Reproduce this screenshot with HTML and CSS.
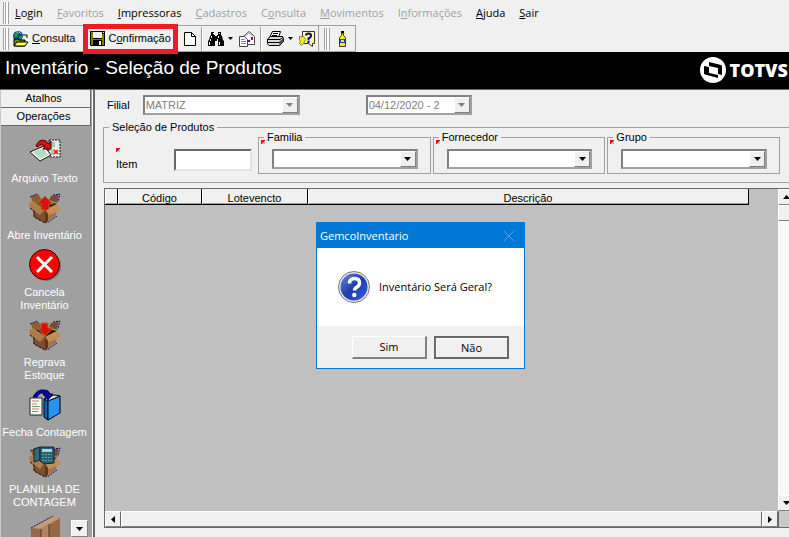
FILE: index.html
```html
<!DOCTYPE html>
<html lang="pt-BR">
<head>
<meta charset="utf-8">
<title>Inventário - Seleção de Produtos</title>
<link rel="stylesheet" href="styles.css">
</head>
<body>
<svg class="defs" aria-hidden="true">
  <symbol id="box" viewBox="0 0 32 32">
    <path d="M3 13l13 5v13L5 25z" fill="#7c5030"/>
    <path d="M16 18l12-5-1 11-11 7z" fill="#a87444"/>
    <path d="M16 18v13l3-2V17z" fill="#5c381c"/>
    <path d="M3 13l10-5 15 4-12 6z" fill="#2c1a0c"/>
    <path d="M2 4l7-2 4 6-9 5z" fill="#8c5c34"/>
    <path d="M22 4l8-2-2 9-8-3z" fill="#7c4c2c"/>
    <path d="M0 11l4-2 12 8-5 6L1 16z" fill="#b07c4c"/>
    <path d="M16 18l12-6 4 6-12 5z" fill="#c48e5c"/>
    <path d="M1 5l7-3M24 3l7-1-2 8M28 24l-10 7" fill="none" stroke="#10108a" stroke-dasharray="2 1"/>
    <path d="M1 16l4 3v6l11 6 2-1" fill="none" stroke="#1c1008" stroke-dasharray="3 1"/>
  </symbol>
  <symbol id="down" viewBox="0 0 7 4"><path d="M0 0h7L3.500 4z" fill="currentColor"/></symbol>
</svg>

<nav class="menubar">
  <span class="grip"></span>
  <a href="#"><u>L</u>ogin</a>
  <a href="#" class="off"><u>F</u>avoritos</a>
  <a href="#"><u>I</u>mpressoras</a>
  <a href="#" class="off"><u>C</u>adastros</a>
  <a href="#" class="off">C<u>o</u>nsulta</a>
  <a href="#" class="off"><u>M</u>ovimentos</a>
  <a href="#" class="off">I<u>n</u>formações</a>
  <a href="#"><u>A</u>juda</a>
  <a href="#"><u>S</u>air</a>
</nav>

<div class="toolbar">
  <div class="band">
    <span class="grip"></span>
    <button class="tool consult">
      <svg width="17" height="16" viewBox="0 0 17 16"><circle cx="6" cy="5" r="5" fill="#0a3c8c"/><path d="M2 3l3-2 2 2-2 3-2 1zM7 6l3-2 1 2-3 3z" fill="#18a040"/><path d="M4 1l3 0 2 2" stroke="#9cf" fill="none"/><path d="M2 8h4l1 1h6v6H2z" fill="#808000" stroke="#000"/><path d="M2 15l3-4h11l-3 4z" fill="#ffff60" stroke="#000"/><path d="M11 4h4v3" fill="none" stroke="#000"/></svg>
      <span><u>C</u>onsulta</span>
    </button>
    <button class="tool confirm">
      <svg width="15" height="15" viewBox="0 0 15 15"><path d="M0 0h15v15H1l-1-1z" fill="#000"/><path d="M1 1h2v7h9V3h2v11H1z" fill="#808000"/><path d="M3 1h9v6H3z" fill="#efefef"/><path d="M3 9h9v6H3z" fill="#000"/><path d="M9 10h2v4H9z" fill="#efefef"/><path d="M13 1h1v1h-1z" fill="#efefef"/></svg>
      <span>C<u>o</u>nfirmação</span>
    </button>
    <button class="tool" aria-label="Novo">
      <svg width="12" height="14" viewBox="0 0 12 14"><path d="M.5.5h7l4 4v9H.5z" fill="#fff" stroke="#000"/><path d="M7.500.5v4h4" fill="none" stroke="#000"/></svg>
    </button>
    <span class="sep"></span>
    <button class="tool" aria-label="Localizar">
      <svg width="16" height="14" viewBox="0 0 16 14"><path d="M3 0h3v3h1v1h2V3h1V0h3v3l1 1 1 4 1 1v5h-6V9H7v5H0V9l1-1 1-4 1-1z" fill="#000"/><path d="M3 4h1v2H3zM2 7h1v2H2zM10 4h1v2h-1zM9 7h1v2H9zM1 10h1v3H1zM11 10h1v3h-1zM5 1h1v1H5zM11 1h1v1h-1z" fill="#fff"/></svg>
      <svg class="caret" width="5" height="3" viewBox="0 0 5 3"><path d="M0 0h5L2.500 3z"/></svg>
    </button>
    <button class="tool" aria-label="Enviar">
      <svg width="16" height="16" viewBox="0 0 16 16"><path d="M4.500 5.500L10 .5l5.500 5v8h-11z" fill="#fff" stroke="#444"/><path d="M6 5l4-3 4 3" fill="none" stroke="#aaa"/><path d="M12 6h2v3h-2z" fill="#d00020"/><path d="M8 9h3v2H8z" fill="#2020a0"/><path d="M.5 5.500h5l3 3v7h-8z" fill="#fff" stroke="#444"/><path d="M2 8.500h4M2 10.500h5M2 12.500h5" stroke="#888"/></svg>
    </button>
    <span class="sep"></span>
    <button class="tool" aria-label="Imprimir">
      <svg width="17" height="15" viewBox="0 0 17 15"><path d="M5.500.5h8l-2 6h-9z" fill="#fff" stroke="#000"/><path d="M6 2.500h5M5 4.500h5" stroke="#000"/><path d="M.5 8l3-2.500h12l1 2v3l-4 4H2l-1.500-2z" fill="#d8d8d8" stroke="#000"/><path d="M1 8.500h12l3-2M1 11.500h11l4-3" fill="none" stroke="#000"/><path d="M5 12h4v1H5z" fill="#ee0"/><path d="M12 12l4-4v3l-4 3z" fill="#555"/></svg>
      <svg class="caret" width="5" height="3" viewBox="0 0 5 3"><path d="M0 0h5L2.500 3z"/></svg>
    </button>
    <button class="tool" aria-label="Ajuda">
      <svg width="16" height="16" viewBox="0 0 16 16"><path d="M3.500.5h12v12h-2v3l-4-3h-6z" fill="#ffff90" stroke="#333"/><path d="M4 1h2v2H4zM12 2h2v2h-2zM5 9h2v2H5z" fill="#fff"/><path d="M7 4.500Q7 2.500 9.500 2.500t2.500 2-2.500 3v2" fill="none" stroke="#0000a0" stroke-width="2"/><path d="M8.500 10h2v2h-2z" fill="#0000a0"/><path d="M.5 5.500l4 0 2 3-2 4-2 2-2-2 1-2-1-2z" fill="#ffee00" stroke="#777"/></svg>
    </button>
  </div>
  <div class="band second">
    <span class="grip"></span>
    <button class="tool bottle" aria-label="Produto">
      <svg width="9" height="16" viewBox="0 0 9 16"><path d="M3 0h3v2H3z" fill="#000"/><path d="M3.500 2.500h2v2l2 2v9h-6v-9l2-2z" fill="#ffee00" stroke="#333"/><path d="M2 8h5v1H2zM2 8h1v3H2zM2 11h5v1H2zM6 9h1v2H6z" fill="#2040c0"/></svg>
    </button>
  </div>
</div>

<header class="title">
  <h1>Inventário - Seleção de Produtos</h1>
  <div class="brand">
    <svg width="26" height="26" viewBox="0 0 26 26"><circle cx="13" cy="13" r="13" fill="#fff"/><path d="M4 9l5 1v6l9 2v3l-11-3-3-1z" fill="#000"/><path d="M9 5l12 3 1 1v9l-4-1v-6L9 9z" fill="#000"/><path d="M9 10l8 2v5l-8-2z" fill="#fff"/></svg>
    <span>TOTVS</span>
  </div>
</header>

<div class="work">
  <aside class="side">
    <button class="tab">Atalhos</button>
    <button class="tab">Operações</button>
    <div class="ops">
      <button class="op">
        <svg width="32" height="32" viewBox="0 0 32 32"><path d="M20 5h11v17H20z" fill="#e8ece8" stroke="#111" stroke-dasharray="2 1"/><path d="M22 7h4v5h-4zM22 14h3v6h-3z" fill="#b0c4b0"/><path d="M25 15l4 4m0-4l-4 4" stroke="#f00" stroke-width="1.500"/><path d="M1 17l14-6 7 9-11 6z" fill="#fff" stroke="#111"/><path d="M4 17l10-4 5 7-8 4z" fill="#b4dcc0"/><path d="M7 11Q10 3 17 6l2 3 3-3v8h-8l2-3q-4-3-7 1z" fill="#e01010" stroke="#400"/></svg>
        <span>Arquivo Texto</span>
      </button>
      <button class="op">
        <svg width="32" height="32"><use href="#box"/><path d="M16 4l8 8h-4v5l-4 2-4-2v-5H8z" fill="#d81010" stroke="#b07018"/></svg>
        <span>Abre Inventário</span>
      </button>
      <button class="op">
        <svg width="32" height="32" viewBox="0 0 32 32"><circle cx="17" cy="17" r="15" fill="#707070"/><circle cx="15.500" cy="15.500" r="15" fill="#f00" stroke="#400"/><path d="M8 8l15 15M23 8L8 23" stroke="#fff" stroke-width="3"/></svg>
        <span>Cancela<br>Inventário</span>
      </button>
      <button class="op">
        <svg width="32" height="32"><use href="#box"/><path d="M12 4h7v5h5l-8 8-7-7h3z" fill="#d81010" stroke="#b07018"/></svg>
        <span>Regrava<br>Estoque</span>
      </button>
      <button class="op">
        <svg width="32" height="32" viewBox="0 0 32 32"><path d="M1 9h12v17H1z" fill="#f4fff0" stroke="#222"/><path d="M3 12h7M3 15h5M3 20h7" stroke="#e07070"/><path d="M3 17.500h8M3 22.500h6" stroke="#70a070"/><path d="M15 10l4 2v19l-4-3z" fill="#1060c0" stroke="#000"/><path d="M19 12l12-5v17l-12 7z" fill="#2494f4" stroke="#000"/><path d="M15 10l10-4 6 1-12 5z" fill="#e8e8e8" stroke="#000"/><path d="M4 8Q8 0 15 1q5 0 6 4h3l-5 6-5-6h2q-5-3-8 3z" fill="#0000c0" stroke="#000030"/></svg>
        <span>Fecha Contagem</span>
      </button>
      <button class="op">
        <svg width="32" height="32"><use href="#box"/><path d="M5 3l6-2v13l-6 2z" fill="#386878" stroke="#102830"/><path d="M11 1h14v16l-10 1-4-3z" fill="#286070" stroke="#102830"/><path d="M13 3h10v3H13z" fill="#a8d4d8"/><path d="M13 8.500h10M13 11.500h10M13 14.500h10" stroke="#68a0a8" stroke-dasharray="2 1"/></svg>
        <span>PLANILHA DE<br>CONTAGEM</span>
      </button>
      <button class="op" aria-label="Pacote">
        <svg width="32" height="32" viewBox="0 0 32 32"><path d="M2 12l22-12 7 2v30H2z" fill="#946848"/><path d="M2 12l22-12 7 2-19 11z" fill="#c49a78"/><path d="M12 13v19h8V8z" fill="#b08464"/><path d="M12 13v19M20 8v24" stroke="#583820"/><path d="M2 12l22-12" stroke="#10108a" stroke-dasharray="2 1"/></svg>
      </button>
    </div>
    <button class="more" aria-label="Mais"><svg width="7" height="4"><use href="#down"/></svg></button>
  </aside>

  <main class="content">
    <div class="filters">
      <label for="filial">Filial</label>
      <div class="combo wide"><select id="filial" disabled><option>MATRIZ</option></select><span class="drop"><svg width="7" height="4"><use href="#down"/></svg></span></div>
      <div class="combo date"><select aria-label="Data" disabled><option>04/12/2020 - 2</option></select><span class="drop"><svg width="7" height="4"><use href="#down"/></svg></span></div>
    </div>

    <fieldset class="group outer">
      <legend>Seleção de Produtos</legend>
      <div class="fields">
        <div class="item"><i class="mark"></i><label for="item">Item</label><input id="item" type="text"></div>
        <fieldset class="group inner"><legend><label for="familia">Familia</label></legend><i class="mark"></i>
          <div class="combo"><select id="familia"><option></option></select><span class="drop"><svg width="7" height="4"><use href="#down"/></svg></span></div></fieldset>
        <fieldset class="group inner"><legend><label for="fornecedor">Fornecedor</label></legend><i class="mark"></i>
          <div class="combo"><select id="fornecedor"><option></option></select><span class="drop"><svg width="7" height="4"><use href="#down"/></svg></span></div></fieldset>
        <fieldset class="group inner"><legend><label for="grupo">Grupo</label></legend><i class="mark"></i>
          <div class="combo"><select id="grupo"><option></option></select><span class="drop"><svg width="7" height="4"><use href="#down"/></svg></span></div></fieldset>
      </div>
    </fieldset>

    <div class="grid">
      <div class="sheet">
        <table>
          <colgroup><col class="c-mark"><col class="c-code"><col class="c-lot"><col></colgroup>
          <thead><tr><th></th><th>Código</th><th>Lotevencto</th><th>Descrição</th></tr></thead>
        </table>
      </div>
      <div class="vbar">
        <span class="btn"><svg width="7" height="4" viewBox="0 0 7 4"><path d="M0 4h7L3.500 0z"/></svg></span>
        <span class="btn"></span>
        <span class="track"></span>
        <span class="btn"><svg width="7" height="4"><use href="#down"/></svg></span>
      </div>
      <div class="hbar">
        <span class="btn"><svg width="4" height="7" viewBox="0 0 4 7"><path d="M4 0v7L0 3.500z"/></svg></span>
        <span class="btn thumb"></span>
        <span class="btn"><svg width="4" height="7" viewBox="0 0 4 7"><path d="M0 0v7l4-3.500z"/></svg></span>
      </div>
      <div class="corner"></div>
    </div>
  </main>
</div>

<div class="dialog" role="dialog" aria-labelledby="dlg">
  <div class="dialog-title"><span id="dlg">GemcoInventario</span>
    <button aria-label="Fechar"><svg width="10" height="10" viewBox="0 0 10 10"><path d="M0 0l10 10M10 0L0 10" stroke="#4ea2e8"/></svg></button></div>
  <div class="dialog-body">
    <svg width="32" height="32" viewBox="0 0 32 32"><defs><linearGradient id="q" x1="0" y1="0" x2="1" y2="1"><stop offset="0" stop-color="#6a8cdc"/><stop offset=".5" stop-color="#1c3ca8"/><stop offset="1" stop-color="#3c60e0"/></linearGradient></defs><circle cx="16" cy="16" r="15.500" fill="#e8e8e8" stroke="#777"/><circle cx="16" cy="16" r="13.500" fill="url(#q)"/><path d="M11.500 12.500q0-5 5-5t5 4.500q0 2.500-2.500 4t-2.500 3.500" fill="none" stroke="#fff" stroke-width="3.500"/><circle cx="16.300" cy="24" r="2.200" fill="#fff"/></svg>
    <p>Inventário Será Geral?</p>
  </div>
  <div class="dialog-foot"><button>Sim</button><button class="default">Não</button></div>
</div>
</body>
</html>
```
FILE: styles.css
```css
* { box-sizing: border-box; }

body {
  margin: 0;
  height: 100vh;
  display: flex;
  flex-direction: column;
  overflow: hidden;
  background: #f0f0f0;
  color: #000;
  font: 11px/13px "Liberation Sans", Arial, sans-serif;
}

button, input, select { font: inherit; color: inherit; }
button { margin: 0; padding: 0; border: 0; background: none; }
svg { display: block; flex: none; }
.defs { position: absolute; width: 0; height: 0; }

/* menu and toolbar */
.menubar {
  display: flex;
  align-items: center;
  gap: 14px;
  height: 25px;
  padding-left: 3px;
  font: 11px/16px "Open Sans", "Segoe UI", sans-serif;
}
.menubar a { color: #000; text-decoration: none; }
.menubar a.off { color: #a0a0a0; }
.menubar .grip { margin-right: -8px; }
.grip {
  flex: none;
  width: 6px;
  height: 22px;
  border: solid #a0a0a0;
  border-width: 0 1px;
  background: linear-gradient(90deg, #fff 1px, #a0a0a0 1px 2px, #fff 2px);
}
.toolbar { display: flex; height: 27px; }
.band {
  display: flex;
  align-items: center;
  padding-left: 3px;
  border: solid #a0a0a0;
  border-width: 1px 1px 1px 0;
}
.second { padding-left: 5px; }
.tool { display: flex; align-items: center; padding: 0 3px; }
.consult { gap: 3px; }
.confirm {
  position: relative;
  z-index: 1;
  gap: 3px;
  height: 30px;
  margin: 0 3px 0 5px;
  padding: 0 2px;
  border: 5px solid #ed1c24;
  background: #f0f0f0;
}
.caret { margin-left: 4px; }
.sep { width: 2px; height: 24px; margin: 0 2px; background: linear-gradient(90deg, #a0a0a0 1px, #fff 1px); }
.bottle { padding: 0 8px; }

/* black title strip */
.title {
  display: flex;
  align-items: flex-start;
  justify-content: space-between;
  height: 38px;
  padding: 5px 1px 0 5px;
  border-bottom: 1px solid #696969;
  background: #000;
  color: #fff;
}
.title h1 { margin: 0; font-size: 19px; font-weight: 400; line-height: 22px; }
.brand { display: flex; align-items: center; gap: 4px; font: 800 18px/26px "Open Sans", sans-serif; }

.work { flex: 1; display: flex; min-height: 0; }

/* sidebar */
.side {
  position: relative;
  flex: none;
  width: 93px;
  padding-right: 1px;
  overflow: hidden;
  border-right: 1px solid #fff;
  border-left: 1px solid #c8c8c8;
  background: #a0a0a0;
}
.tab {
  display: block;
  width: 90px;
  height: 18px;
  background: #f0f0f0;
  border: solid #696969;
  border-width: 0 1px 1px 0;
  padding-right: 4px;
}
.ops { display: flex; flex-direction: column; gap: 7px; padding: 9px 3px 0 0; }
.op { display: flex; flex-direction: column; align-items: center; gap: 5px; color: #fff; white-space: nowrap; }
.more, .btn, .drop {
  display: flex;
  align-items: center;
  justify-content: center;
  background: #f0f0f0;
  border: 1px solid;
  border-color: #fff #808080 #808080 #fff;
}
.more { position: absolute; right: 4px; bottom: 0; width: 17px; height: 17px; }

/* working area */
.content {
  flex: 1;
  min-width: 0;
  display: flex;
  flex-direction: column;
  border-left: 2px solid #696969;
  padding: 5px 0 9px 8px;
}
.filters { display: flex; align-items: center; padding-left: 4px; }
.filters .wide { width: 157px; margin-left: 13px; }
.filters .date { width: 106px; margin-left: 66px; }
.combo { position: relative; height: 20px; }
.combo select, .item input {
  width: 100%;
  height: 100%;
  margin: 0;
  padding: 0 1px;
  appearance: none;
  background: #fff;
  border: 2px solid;
  border-color: #696969 #e3e3e3 #e3e3e3 #696969;
  border-radius: 0;
  opacity: 1;
}
.combo select { border-color: #808080 #a0a0a0 #a0a0a0 #808080; }
.combo select:disabled, .combo select:disabled + .drop { color: #808080; }
.drop { position: absolute; top: 2px; right: 2px; bottom: 2px; width: 16px; pointer-events: none; }

.group {
  min-width: 0;
  margin: 0;
  border: 1px solid #a0a0a0;
}
.group legend { padding: 0 3px; }
.outer { margin-top: 6px; padding: 0 9px 8px 12px; border-right: 0; }
.outer > legend { margin-left: -7px; }
.fields { display: flex; gap: 2px; margin-top: -3px; }
.item {
  position: relative;
  flex: none;
  display: flex;
  align-items: flex-end;
  width: 140px;
  padding-bottom: 3px;
}
.item input { width: 78px; height: 22px; margin-left: auto; margin-right: 4px; }
.item .mark { position: absolute; left: 0; top: 17px; }
.mark { width: 4px; height: 4px; background: linear-gradient(135deg, #f00 55%, #bbb 55%); }
.inner { position: relative; flex: 1; height: 43px; padding: 0 12px 0 13px; }
.inner legend { margin-left: -8px; }
.inner .mark { position: absolute; left: 2px; top: -4px; }
.inner .combo { margin-top: 5px; }

/* data grid */
.grid {
  flex: 1;
  min-height: 0;
  display: grid;
  grid-template: 1fr 16px / 1fr 11px;
  margin: 5px 0 0 1px;
  border: solid #696969;
  border-width: 1px 0 1px 1px;
}
.sheet { background: #c0c0c0; padding-right: 29px; }
table { width: 100%; table-layout: fixed; border-collapse: separate; border-spacing: 0; }
th {
  height: 16px;
  padding: 2px 0 0;
  line-height: 12px;
  font-weight: 400;
  background: #f0f0f0;
  border: solid #000;
  border-width: 0 1px 1px 0;
  box-shadow: inset 1px 0 #fff, inset 0 -1px #a0a0a0;
}
.c-mark { width: 13px; }
.c-code { width: 84px; }
.c-lot { width: 106px; }
.vbar { display: flex; flex-direction: column; background: #f8f8f8; overflow: hidden; }
.vbar .btn { width: 16px; height: 16px; flex: none; }
.track { flex: 1; }
.hbar { display: flex; }
.hbar .btn { width: 16px; border-right-color: #696969; }
.hbar .thumb { flex: 1; }
.corner { background: #c8c8c8; border-left: 1px solid #696969; }

/* message box */
.dialog {
  position: absolute;
  left: 316px;
  top: 222px;
  width: 209px;
  border: 1px solid #0078d7;
  background: #fff;
  font: 11px/16px "Open Sans", "Segoe UI", sans-serif;
}
.dialog-title {
  display: flex;
  align-items: center;
  justify-content: space-between;
  height: 25px;
  padding: 0 10px 0 3px;
  background: #0078d7;
  color: #fff;
}
.dialog-body { display: flex; align-items: center; gap: 9px; height: 78px; padding: 0 0 0 21px; }
.dialog-body p { margin: 0; }
.dialog-foot { display: flex; justify-content: flex-end; gap: 7px; padding: 10px 15px 9px; background: #f0f0f0; }
.dialog-foot button {
  width: 75px;
  height: 23px;
  border: solid;
  border-width: 1px 2px 2px 1px;
  border-color: #fff #808080 #808080 #fff;
}
.dialog-foot .default { border-width: 2px; border-color: #696969; box-shadow: inset 1px 1px #fff; }
```
